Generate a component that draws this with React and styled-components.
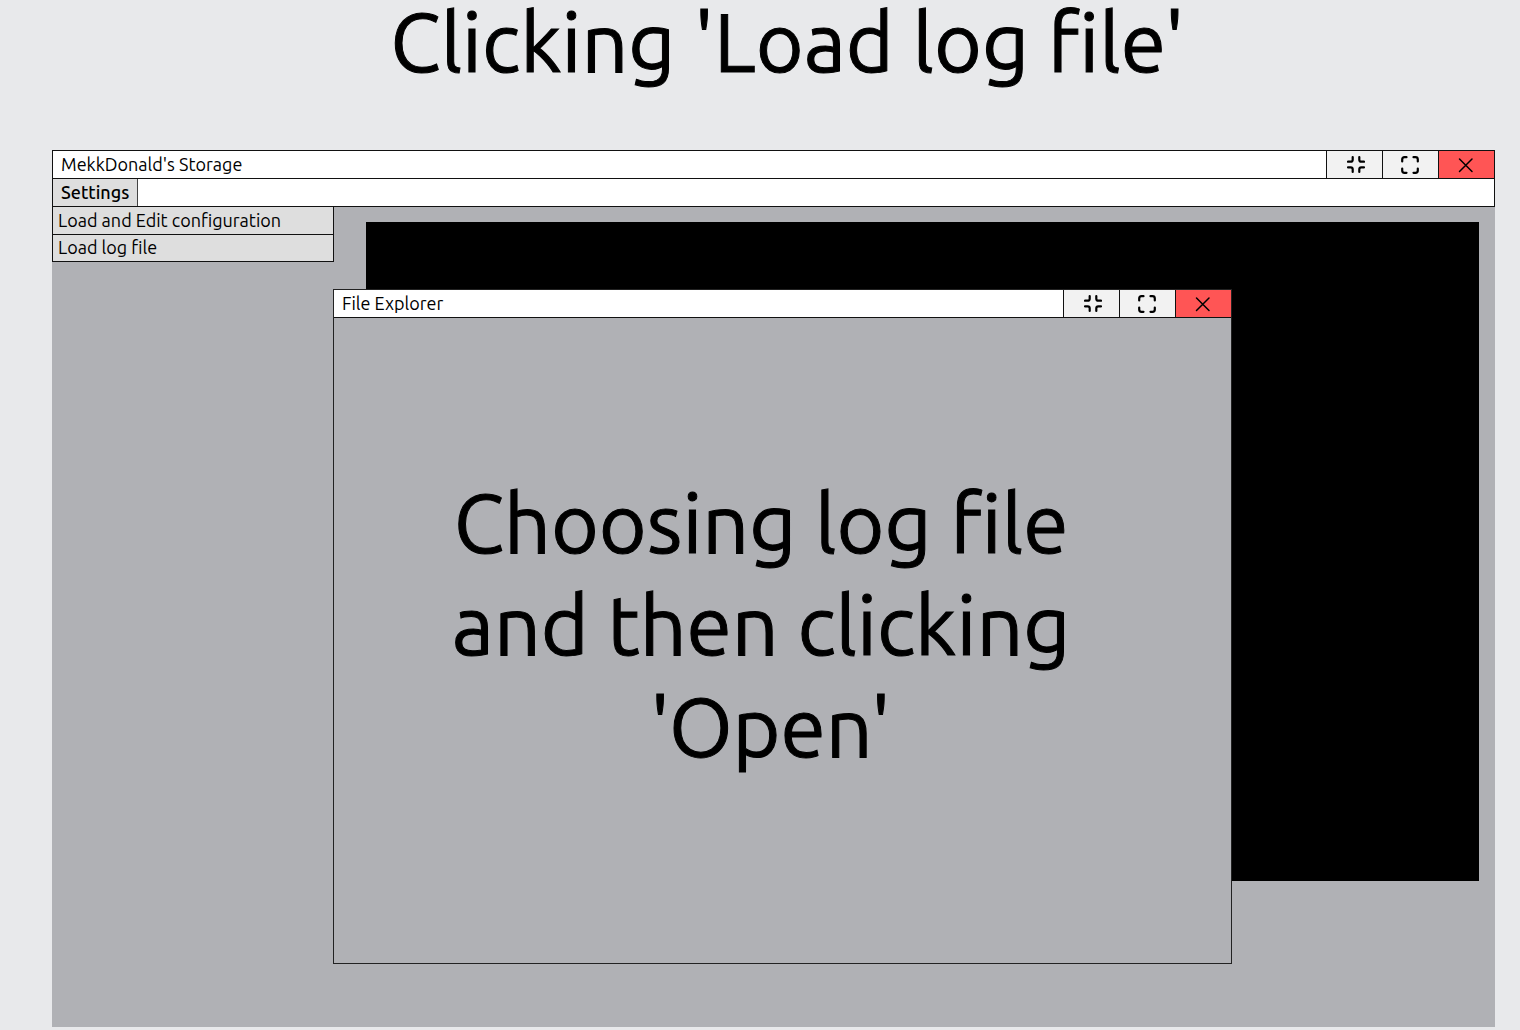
import React from "react";
import styled, { createGlobalStyle, css } from "styled-components";

const GlobalStyle = createGlobalStyle`
  *, *::before, *::after { box-sizing: border-box; }
  body {
    margin: 0;
    background: #e8e9eb;
    color: #000;
    font-family: Ubuntu, "Noto Sans", sans-serif;
  }
  button { font: inherit; color: inherit; }
`;

const displayText = css`
  font-size: 82px;
  font-weight: 400;
  -webkit-text-stroke: 1px #000;
`;

const Page = styled.main`
  display: flex;
  flex-direction: column;
  min-height: 100vh;
  padding: 0 25px 3px 52px;
`;

const Heading = styled.h1`
  ${displayText}
  margin: 0;
  padding-left: 28px;
  height: 150px;
  line-height: 84px;
  text-align: center;
  white-space: nowrap;
`;

const Window = styled.section`
  position: relative;
  flex: 1;
  display: flex;
  flex-direction: column;
  background: #b0b1b5;
`;

const Bar = styled.header`
  display: flex;
  justify-content: space-between;
  height: 29px;
  background: #fff;
  border: 1px solid #111;
`;

const Title = styled.h2`
  margin: 0;
  padding-left: 8px;
  font-size: 18px;
  font-weight: 400;
  line-height: 26px;
`;

const Controls = styled.div`
  display: flex;
`;

const ControlButton = styled.button`
  display: flex;
  align-items: center;
  width: 56px;
  padding: 0 0 0 ${(p) => (p.$kind === "collapse" ? "20px" : "18px")};
  border: 0;
  border-left: 1px solid #111;
  background: ${(p) => (p.$kind === "close" ? "#ff5555" : "#f2f2f2")};
`;

const MenuBar = styled.nav`
  display: flex;
  height: 29px;
  margin-top: -1px;
  background: #fff;
  border: 1px solid #111;
`;

const MenuTrigger = styled.button`
  width: 85px;
  padding: 0 0 2px 8px;
  border: 0;
  border-right: 1px solid #444;
  background: #dedede;
  font-size: 18px;
  font-weight: 500;
  line-height: 24px;
  text-align: left;
`;

const Menu = styled.div`
  position: absolute;
  top: 56px;
  left: 0;
  display: flex;
  flex-direction: column;
  width: 282px;
  border: 1px solid #111;
  background: #dedede;
`;

const MenuItem = styled.button`
  height: 27px;
  padding: 0 5px 2px;
  border: 0;
  background: none;
  font-size: 18px;
  line-height: 24px;
  text-align: left;

  & + & { border-top: 1px solid #111; }
`;

const Screen = styled.div`
  height: 659px;
  margin: 15px 16px 0 314px;
  background: #000;
`;

const Dialog = styled.section`
  position: absolute;
  top: 139px;
  left: 281px;
  display: flex;
  flex-direction: column;
  width: 899px;
  height: 675px;
  border: 1px solid #222;
  background: #b0b1b5;
`;

const DialogBar = styled(Bar)`
  height: 28px;
  border-width: 0 0 1px;
`;

const Message = styled.p`
  ${displayText}
  flex: 1;
  display: flex;
  flex-direction: column;
  justify-content: center;
  align-items: center;
  margin: 0;
  padding: 0 24px 32px 0;
  line-height: 102px;
  white-space: pre;
`;

const CollapseIcon = () => (
  <svg width="18" height="20" viewBox="0 0 18 20" fill="none" stroke="#000" strokeWidth="2.2" strokeLinecap="round" aria-hidden="true">
    <path d="M5.7 2v2.7q0 2-2 2H1M12.3 2v2.7q0 2 2 2H17M1 12.3h2.7q2 0 2 2V17M17 12.3h-2.7q-2 0-2 2V17" />
  </svg>
);

const ExpandIcon = () => (
  <svg width="18" height="18" viewBox="0 0 18 18" fill="none" stroke="#000" strokeWidth="2.2" strokeLinecap="round" aria-hidden="true">
    <path d="M1.2 5.5V3.5q0-2.3 2.3-2.3h2M12.5 1.2h2q2.3 0 2.3 2.3v2M1.2 12.5v2q0 2.3 2.3 2.3h2M12.5 16.8h2q2.3 0 2.3-2.3v-2" />
  </svg>
);

const CloseIcon = () => (
  <svg width="18" height="18" viewBox="0 0 18 18" fill="none" stroke="#000" strokeWidth="1.5" strokeLinecap="round" aria-hidden="true">
    <path d="M2.5 3l12.5 12.5M15 3L2.5 15.5" />
  </svg>
);

const WindowControls = () => (
  <Controls>
    <ControlButton type="button" aria-label="Minimize" $kind="collapse"><CollapseIcon /></ControlButton>
    <ControlButton type="button" aria-label="Maximize" $kind="expand"><ExpandIcon /></ControlButton>
    <ControlButton type="button" aria-label="Close" $kind="close"><CloseIcon /></ControlButton>
  </Controls>
);

const messageLines = ["Choosing log file ", "and then clicking ", "'Open'"];

export default function App() {
  return (
    <Page>
      <GlobalStyle />
      <Heading>Clicking 'Load log file'</Heading>
      <Window>
        <Bar>
          <Title>MekkDonald's Storage</Title>
          <WindowControls />
        </Bar>
        <MenuBar>
          <MenuTrigger type="button">Settings</MenuTrigger>
        </MenuBar>
        <Menu>
          <MenuItem type="button">Load and Edit configuration</MenuItem>
          <MenuItem type="button">Load log file</MenuItem>
        </Menu>
        <Screen />
        <Dialog>
          <DialogBar>
            <Title>File Explorer</Title>
            <WindowControls />
          </DialogBar>
          <Message>
            {messageLines.map((line) => <span key={line}>{line}</span>)}
          </Message>
        </Dialog>
      </Window>
    </Page>
  );
}
